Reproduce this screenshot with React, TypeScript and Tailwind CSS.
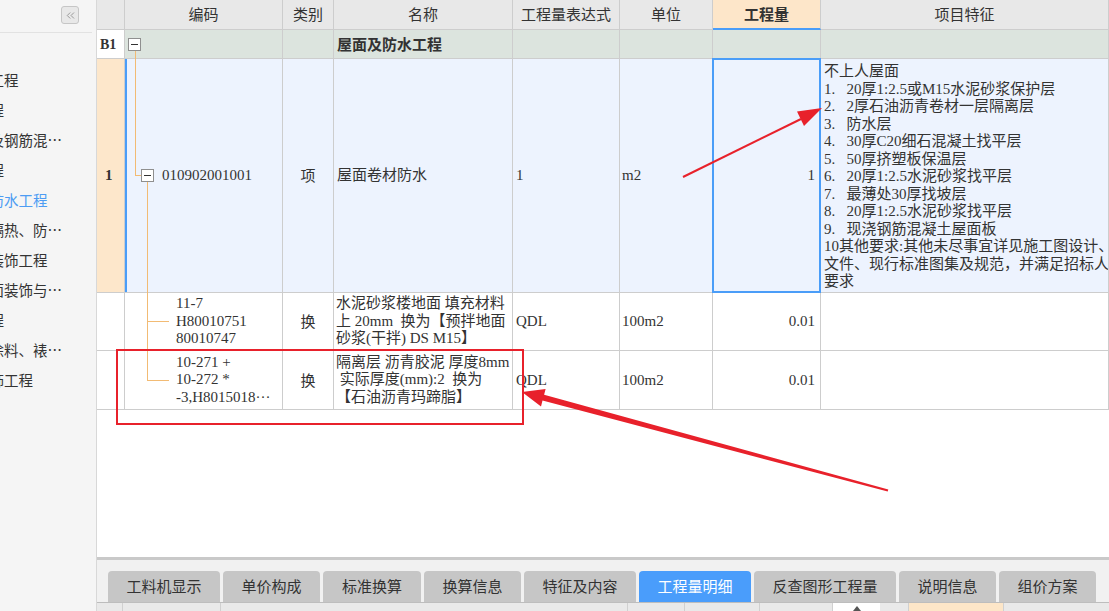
import { ChevronsLeft } from "lucide-react";

const sideItems = [
  { text: "土石方工程" },
  { text: "砌筑工程" },
  { text: "混凝土及钢筋混…" },
  { text: "门窗工程" },
  { text: "屋面及防水工程", active: true },
  { text: "保温、隔热、防…" },
  { text: "楼地面装饰工程" },
  { text: "墙、柱面装饰与…" },
  { text: "天棚工程" },
  { text: "油漆、涂料、裱…" },
  { text: "其他装饰工程" },
];

const features = [
  "不上人屋面",
  "1.   20厚1:2.5或M15水泥砂浆保护层",
  "2.   2厚石油沥青卷材一层隔离层",
  "3.   防水层",
  "4.   30厚C20细石混凝土找平层",
  "5.   50厚挤塑板保温层",
  "6.   20厚1:2.5水泥砂浆找平层",
  "7.   最薄处30厚找坡层",
  "8.   20厚1:2.5水泥砂浆找平层",
  "9.   现浇钢筋混凝土屋面板",
  "10其他要求:其他未尽事宜详见施工图设计、",
  "文件、现行标准图集及规范，并满足招标人",
  "要求",
];

const tabs = [
  { label: "工料机显示", w: "w-[112px]" },
  { label: "单价构成", w: "w-[97px]" },
  { label: "标准换算", w: "w-[98px]" },
  { label: "换算信息", w: "w-[97px]" },
  { label: "特征及内容", w: "w-[112px]" },
  { label: "工程量明细", w: "w-[112px]", active: true },
  { label: "反查图形工程量", w: "w-[142px]" },
  { label: "说明信息", w: "w-[97px]" },
  { label: "组价方案", w: "w-[97px]" },
];

const row = "grid grid-cols-[28px_158px_51px_179px_107px_93px_108px_1fr]";
const cell = "relative border-r border-b border-[#cdcdcd]";

function TreeBox({ className }: { className: string }) {
  return (
    <div className={`absolute w-[13px] h-[13px] bg-white border border-[#8f8f8f] flex items-center justify-center ${className}`}>
      <div className="w-[7px] h-px bg-[#333]" />
    </div>
  );
}

function Lines({ items }: { items: string[] }) {
  return (
    <div className="leading-[17.5px] whitespace-pre">
      {items.map((t, i) => (
        <div key={i}>{t}</div>
      ))}
    </div>
  );
}

export default function App() {
  return (
    <div className="relative w-[1109px] h-[611px] overflow-hidden flex bg-white text-[#333]">
      {/* sidebar */}
      <div className="w-[97px] shrink-0 bg-[#f5f5f5] border-r border-[#d8d8d8] overflow-hidden font-['Noto_Sans_CJK_SC',sans-serif] text-[14.5px]">
        <div className="h-[33px] mr-[4px] border-b border-[#e2e2e2] flex justify-end items-start pt-[6px] pr-[13px]">
          <div className="w-[18px] h-[18px] rounded-[3px] border border-[#c6c6c6] bg-[#e8e8e8] flex items-center justify-center">
            <ChevronsLeft size={13} color="#8c8c8c" strokeWidth={1.6} />
          </div>
        </div>
        <div className="pt-[32px]">
          {sideItems.map((it, i) => (
            <div key={i} className="h-[30px] flex items-center whitespace-nowrap">
              <span className={`-ml-[54px] ${it.active ? "text-[#4d9cf3]" : "text-[#333]"}`}>{it.text}</span>
            </div>
          ))}
        </div>
      </div>

      {/* main */}
      <div className="flex-1 flex flex-col">
        <div className="flex-1 font-['Liberation_Serif','Noto_Sans_CJK_SC',serif] text-[15px]">
          {/* header */}
          <div className={`${row} h-[30px] bg-[#e8e8e8] font-['Noto_Sans_CJK_SC',sans-serif]`}>
            <div className={cell} />
            <div className={`${cell} flex items-center justify-center`}>编码</div>
            <div className={`${cell} flex items-center justify-center`}>类别</div>
            <div className={`${cell} flex items-center justify-center`}>名称</div>
            <div className={`${cell} flex items-center justify-center`}>工程量表达式</div>
            <div className={`${cell} flex items-center justify-center`}>单位</div>
            <div className="relative border-r border-[#cdcdcd] border-b-2 border-b-[#4a9df8] bg-[#fde6c9] flex items-center justify-center font-bold">工程量</div>
            <div className={`${cell} flex items-center justify-center`}>项目特征</div>
          </div>

          {/* B1 */}
          <div className={`${row} h-[29px] bg-[#dce4de]`}>
            <div className={`${cell} bg-white flex items-center pl-[3px] font-bold text-[14px]`}>B1</div>
            <div className={cell}>
              <TreeBox className="left-[3px] top-[8px]" />
              <div className="absolute left-[10px] top-[21px] bottom-[-1px] w-px bg-[#f2bb74]" />
            </div>
            <div className={cell} />
            <div className={`${cell} flex items-center pl-[3px] font-bold font-['Noto_Sans_CJK_SC',sans-serif]`}>屋面及防水工程</div>
            <div className={cell} />
            <div className={cell} />
            <div className="relative border-r border-[#cdcdcd]" />
            <div className={cell} />
          </div>

          {/* row 1 */}
          <div className={`${row} h-[234px] bg-[#edf3fe]`}>
            <div className={`${cell} bg-[#fde7cb] flex items-center pl-[8px] font-bold`}>1</div>
            <div className={`${cell} flex items-center pl-[37px]`}>
              <div className="absolute left-0 top-0 bottom-0 w-[2px] bg-[#4a9df8]" />
              <div className="absolute left-[10px] top-0 h-[117px] w-px bg-[#f2bb74]" />
              <div className="absolute left-[10px] top-[116px] w-[6px] h-px bg-[#f2bb74]" />
              <TreeBox className="left-[16px] top-[110px]" />
              <div className="absolute left-[22px] top-[123px] bottom-[-1px] w-px bg-[#f2bb74]" />
              010902001001
            </div>
            <div className={`${cell} flex items-center justify-center font-['Noto_Sans_CJK_SC',sans-serif]`}>项</div>
            <div className={`${cell} flex items-center pl-[3px]`}>屋面卷材防水</div>
            <div className={`${cell} flex items-center pl-[3px]`}>1</div>
            <div className={`${cell} flex items-center pl-[2px]`}>m2</div>
            <div className={`${cell} flex items-center justify-end pr-[5px]`}>
              <div className="absolute -left-px -top-px right-[-1px] bottom-[-1px] border-2 border-[#4a9df8]" />
              1
            </div>
            <div className={`${cell} overflow-hidden pl-[3px] pt-[4px]`}>
              <Lines items={features} />
            </div>
          </div>

          {/* row 2 */}
          <div className={`${row} h-[58px] bg-white`}>
            <div className={cell} />
            <div className={`${cell} flex items-center pl-[51px]`}>
              <div className="absolute left-[22px] top-0 bottom-[-1px] w-px bg-[#f2bb74]" />
              <div className="absolute left-[22px] top-[28px] w-[22px] h-px bg-[#f2bb74]" />
              <Lines items={["11-7", "H80010751", "80010747"]} />
            </div>
            <div className={`${cell} flex items-center justify-center font-['Noto_Sans_CJK_SC',sans-serif]`}>换</div>
            <div className={`${cell} overflow-hidden flex items-center pl-[2px]`}>
              <Lines items={["水泥砂浆楼地面 填充材料", "上 20mm  换为【预拌地面", "砂浆(干拌) DS M15】"]} />
            </div>
            <div className={`${cell} flex items-center pl-[3px]`}>QDL</div>
            <div className={`${cell} flex items-center pl-[2px]`}>100m2</div>
            <div className={`${cell} flex items-center justify-end pr-[5px]`}>0.01</div>
            <div className={cell} />
          </div>

          {/* row 3 */}
          <div className={`${row} h-[59px] bg-white`}>
            <div className={cell} />
            <div className={`${cell} flex items-center pl-[51px]`}>
              <div className="absolute left-[22px] top-0 h-[30px] w-px bg-[#f2bb74]" />
              <div className="absolute left-[22px] top-[29px] w-[22px] h-px bg-[#f2bb74]" />
              <Lines items={["10-271 +", "10-272 *", "-3,H8015018···"]} />
            </div>
            <div className={`${cell} flex items-center justify-center font-['Noto_Sans_CJK_SC',sans-serif]`}>换</div>
            <div className={`${cell} overflow-hidden flex items-center pl-[2px]`}>
              <Lines items={["隔离层 沥青胶泥 厚度8mm", " 实际厚度(mm):2  换为", "【石油沥青玛蹄脂】"]} />
            </div>
            <div className={`${cell} flex items-center pl-[3px]`}>QDL</div>
            <div className={`${cell} flex items-center pl-[2px]`}>100m2</div>
            <div className={`${cell} flex items-center justify-end pr-[5px]`}>0.01</div>
            <div className={cell} />
          </div>
        </div>

        {/* bottom panel */}
        <div className="h-[3px] bg-[#c9c9c9]" />
        <div className="h-[43px] bg-[#f1f1f1] border-b border-[#bdbdbd] flex items-end gap-[3px] pl-[11px] font-['Noto_Sans_CJK_SC',sans-serif] text-[15px]">
          {tabs.map((t) => (
            <div
              key={t.label}
              className={`${t.w} h-[31px] rounded-t-[4px] flex items-center justify-center ${
                t.active ? "bg-[#4a9dfb] text-white" : "bg-[#c6c6c6] text-[#333]"
              }`}
            >
              {t.label}
            </div>
          ))}
        </div>
        <div className="h-[8px] flex bg-[#e9e9e9]">
          <div className="w-[26px] border-r border-[#d0d0d0]" />
          <div className="w-[98px] border-r border-[#d0d0d0]" />
          <div className="w-[407px] border-r border-[#d0d0d0]" />
          <div className="w-[57px] border-r border-[#d0d0d0]" />
          <div className="w-[75px] border-r border-[#d0d0d0]" />
          <div className="w-[73px] border-r border-[#d0d0d0]" />
          <div className="w-[47px] bg-white flex justify-center">
            <div className="w-0 h-0 mt-[3px] border-l-[4px] border-r-[4px] border-b-[5px] border-l-transparent border-r-transparent border-b-[#555]" />
          </div>
          <div className="w-[5px]" />
          <div className="w-[24px] border-r border-[#d0d0d0]" />
          <div className="w-[95px] bg-[#fde6c8] border-r border-[#d0d0d0]" />
          <div className="flex-1" />
        </div>
      </div>

      {/* annotation overlay */}
      <svg className="absolute left-0 top-0 pointer-events-none" width="1109" height="611" viewBox="0 0 1109 611">
        <rect x="117" y="350" width="406" height="74" fill="none" stroke="#e8212b" strokeWidth="2" />
        <line x1="683" y1="177" x2="801" y2="119" stroke="#e8212b" strokeWidth="2" />
        <polygon points="822,108 797,111.5 804,126" fill="#e8212b" />
        <polygon
          points="522,392 545.6,389 544.1,394.8 888.3,489.5 887.7,491.5 542.5,400.6 541,406.4"
          fill="#e8212b"
        />
      </svg>
    </div>
  );
}
